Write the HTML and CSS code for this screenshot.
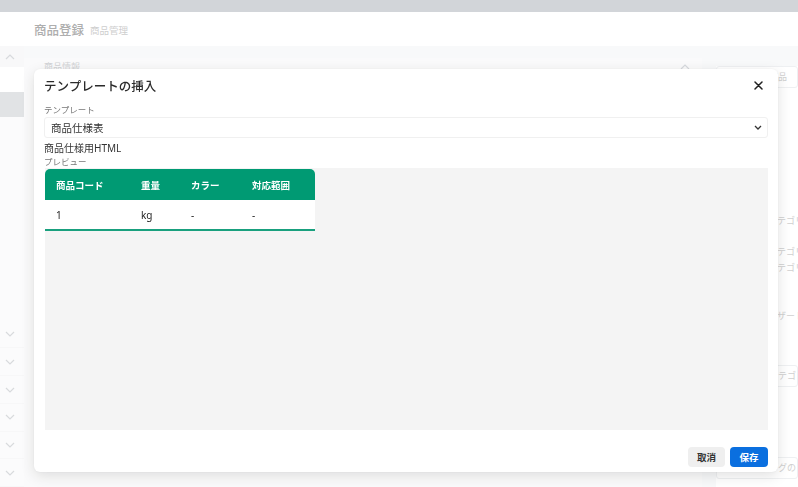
FILE: index.html
```html
<!DOCTYPE html>
<html lang="ja">
<head>
  <meta charset="UTF-8" />
  <title>商品登録 - 商品管理</title>
  <link rel="stylesheet" href="styles.css">
</head>
<body>
  <div class="topbar"></div>

  <div class="layout">
    <!-- サイドメニュー -->
    <aside class="sidebar">
      <div class="side-top"></div>
      <div class="side-toggle">
        <svg width="10" height="6" viewBox="0 0 10 6"><path d="M1 5 L5 1 L9 5" fill="none" stroke="#d2d4d7" stroke-width="1.2"/></svg>
      </div>
      <div class="side-item"></div>
      <div class="side-item active"></div>
      <div class="side-space"></div>
      <div class="side-group"><svg width="10" height="6" viewBox="0 0 10 6"><path d="M1 1 L5 5 L9 1" fill="none" stroke="#d2d4d7" stroke-width="1.2"/></svg></div>
      <div class="side-group"><svg width="10" height="6" viewBox="0 0 10 6"><path d="M1 1 L5 5 L9 1" fill="none" stroke="#d2d4d7" stroke-width="1.2"/></svg></div>
      <div class="side-group"><svg width="10" height="6" viewBox="0 0 10 6"><path d="M1 1 L5 5 L9 1" fill="none" stroke="#d2d4d7" stroke-width="1.2"/></svg></div>
      <div class="side-group"><svg width="10" height="6" viewBox="0 0 10 6"><path d="M1 1 L5 5 L9 1" fill="none" stroke="#d2d4d7" stroke-width="1.2"/></svg></div>
      <div class="side-group"><svg width="10" height="6" viewBox="0 0 10 6"><path d="M1 1 L5 5 L9 1" fill="none" stroke="#d2d4d7" stroke-width="1.2"/></svg></div>
      <div class="side-group"><svg width="10" height="6" viewBox="0 0 10 6"><path d="M1 1 L5 5 L9 1" fill="none" stroke="#d2d4d7" stroke-width="1.2"/></svg></div>
    </aside>

    <main class="main">
      <header class="page-header">
        <span class="page-title">商品登録</span>
        <span class="page-sub">商品管理</span>
      </header>

      <div class="content">
        <section class="card">
          <div class="card-head">
            <span>商品情報</span>
            <svg width="10" height="6" viewBox="0 0 10 6"><path d="M1 5 L5 1 L9 5" fill="none" stroke="#d0d3d8" stroke-width="1.2"/></svg>
          </div>
        </section>

        <section class="side-panel">
          <div class="field box">商品</div>
          <div class="field sp-status">表</div>
          <div class="field sp-cat">カテゴリ</div>
          <div class="field sp-cat2">カテゴリ</div>
          <div class="field">カテゴリ</div>
          <div class="field sp-genre">デザート</div>
          <div class="field sp-tight">IE</div>
          <div class="field box sp-catbox">カテゴリ</div>
          <div class="field box sp-tag">タグの</div>
        </section>
      </div>
    </main>
  </div>

  <!-- テンプレート挿入モーダル -->
  <div class="overlay">
    <div class="modal">
      <div class="modal-header">
        <h2>テンプレートの挿入</h2>
        <button class="close-btn" aria-label="閉じる">
          <svg width="9" height="9" viewBox="0 0 9 9"><path d="M1 1 L8 8 M8 1 L1 8" stroke="#222" stroke-width="1.5" stroke-linecap="round"/></svg>
        </button>
      </div>

      <div class="modal-body">
        <label class="small-label" for="template">テンプレート</label>
        <div class="select" id="template">
          <span>商品仕様表</span>
          <svg width="8" height="5" viewBox="0 0 8 5"><path d="M1 1 L4 4 L7 1" fill="none" stroke="#333" stroke-width="1.3"/></svg>
        </div>

        <div class="template-name">商品仕様用HTML</div>
        <div class="small-label">プレビュー</div>

        <div class="preview">
          <table class="spec-table">
            <thead>
              <tr>
                <th class="c1">商品コード</th>
                <th class="c2">重量</th>
                <th class="c3">カラー</th>
                <th class="c4">対応範囲</th>
              </tr>
            </thead>
            <tbody>
              <tr>
                <td>1</td>
                <td>kg</td>
                <td>-</td>
                <td>-</td>
              </tr>
            </tbody>
          </table>
        </div>
      </div>

      <div class="modal-footer">
        <button class="btn-cancel">取消</button>
        <button class="btn-save">保存</button>
      </div>
    </div>
  </div>
</body>
</html>
```

FILE: styles.css
```css
html, body {
  margin: 0;
  padding: 0;
  height: 100%;
  overflow: hidden;
}

body {
  font-family: 'Noto Sans', 'Noto Sans CJK JP', sans-serif;
  background: #f7f8f9;
  color: #333;
}

.topbar {
  height: 12px;
  background: #cbced3;
}

.layout {
  display: flex;
  height: calc(100% - 12px);
}

/* 背景のサイドメニュー */
.sidebar {
  width: 24px;
  flex-shrink: 0;
  background: #fbfbfc;
  display: flex;
  flex-direction: column;
}
.side-top {
  height: 34px;
  background: #fff;
}
.side-toggle {
  height: 22px;
  display: flex;
  align-items: center;
  justify-content: center;
  padding-right: 4px;
  background: #f7f7f8;
}
.side-item {
  height: 25px;
  background: #fff;
}
.side-item.active {
  background: #dcdee1;
}
.side-space {
  height: 206px;
}
.side-group {
  height: 28px;
  display: flex;
  align-items: center;
  justify-content: center;
  padding-right: 4px;
  border-bottom: 1px solid #f6f6f7;
  box-sizing: border-box;
}

.main {
  flex: 1;
  min-width: 0;
  display: flex;
  flex-direction: column;
}

.page-header {
  height: 34px;
  background: #fff;
  display: flex;
  align-items: center;
  gap: 6px;
  padding-left: 10px;
}
.page-title {
  font-size: 12.5px;
  font-weight: 500;
  color: #a0a0a0;
}
.page-sub {
  font-size: 9.5px;
  color: #c6c6c6;
  margin-top: 2px;
}

.content {
  flex: 1;
  display: flex;
  gap: 14px;
  padding: 12px 0 0 0;
  background: #f7f8f9;
}

.card {
  width: 678px;
  flex-shrink: 0;
  background: #fafafb;
}
.card-head {
  display: flex;
  justify-content: space-between;
  align-items: center;
  padding: 2px 12px 0 20px;
  font-size: 9px;
  color: #c9cbce;
}

.side-panel {
  flex: 1;
  min-width: 0;
  background: #fff;
  margin-top: 8px;
  display: flex;
  flex-direction: column;
  font-size: 9px;
  color: #c8c8c8;
}
.field {
  height: 16px;
  line-height: 16px;
  padding-left: 52px;
  white-space: nowrap;
  overflow: hidden;
}
.field.box {
  height: 22px;
  line-height: 20px;
  box-sizing: border-box;
  border: 1px solid #eceef0;
  border-radius: 3px;
}
.sp-status { margin-top: 54px; }
.sp-cat { margin-top: 55px; }
.sp-cat2 { margin-top: 15px; }
.sp-genre { margin-top: 32px; }
.sp-tight { margin-top: 1px; }
.sp-catbox { margin-top: 24px; }
.sp-tag { margin-top: 70px; }

/* モーダル */
.overlay {
  position: fixed;
  inset: 0;
  background: rgba(255, 255, 255, 0.15);
}

.modal {
  position: absolute;
  left: 34px;
  top: 69px;
  width: 744px;
  height: 403px;
  box-sizing: border-box;
  background: #fff;
  border-radius: 6px;
  box-shadow: 0 4px 14px rgba(0, 0, 0, 0.12), 0 0 2px rgba(0, 0, 0, 0.05);
  display: flex;
  flex-direction: column;
  padding: 0 10px 5px;
}

.modal-header {
  display: flex;
  justify-content: space-between;
  align-items: center;
  height: 20px;
  margin-top: 6px;
  margin-bottom: 8px;
}
.modal-header h2 {
  margin: 0;
  font-size: 12.5px;
  font-weight: 500;
  color: #2b2b2b;
}
.close-btn {
  border: none;
  background: none;
  padding: 0;
  margin-right: 5px;
  width: 9px;
  height: 9px;
  display: flex;
  cursor: pointer;
}

.modal-body {
  display: flex;
  flex-direction: column;
}

.small-label {
  display: block;
  font-size: 8.5px;
  line-height: 14px;
  color: #777;
}

.select {
  height: 21px;
  box-sizing: border-box;
  border: 1px solid #f0f0f0;
  border-radius: 3px;
  display: flex;
  justify-content: space-between;
  align-items: center;
  padding: 0 5px 0 6px;
  font-size: 10.5px;
  color: #333;
}

.template-name {
  margin-top: 3px;
  font-size: 10px;
  line-height: 14px;
  color: #333;
}
.template-name + .small-label {
  line-height: 13px;
}

.preview {
  margin-left: 1px;
  height: 262px;
  background: #f4f4f4;
  padding-top: 1px;
  box-sizing: border-box;
}

.spec-table {
  border-collapse: separate;
  border-spacing: 0;
  width: 270px;
  background: #fff;
  font-size: 10px;
  border-radius: 5px 5px 0 0;
  overflow: hidden;
}
.spec-table th {
  background: #009a73;
  color: #fff;
  font-size: 9.5px;
  font-weight: 700;
  text-align: left;
  height: 31px;
  padding: 0 0 0 11px;
}
.spec-table .c1 { width: 74px; }
.spec-table .c2 { width: 39px; }
.spec-table .c3 { width: 50px; }
.spec-table td {
  height: 29px;
  padding: 0 0 0 11px;
  color: #222;
  border-bottom: 2px solid #19a07e;
}

.modal-footer {
  margin-top: auto;
  display: flex;
  justify-content: flex-end;
  gap: 5px;
}

.btn-cancel,
.btn-save {
  height: 20px;
  border: none;
  border-radius: 4px;
  font-family: inherit;
  font-size: 9.5px;
  font-weight: 700;
  padding: 0;
  cursor: pointer;
}
.btn-cancel {
  width: 37px;
  background: #efefef;
  color: #333;
}
.btn-save {
  width: 38px;
  background: #0a6fdf;
  color: #fff;
}
```
